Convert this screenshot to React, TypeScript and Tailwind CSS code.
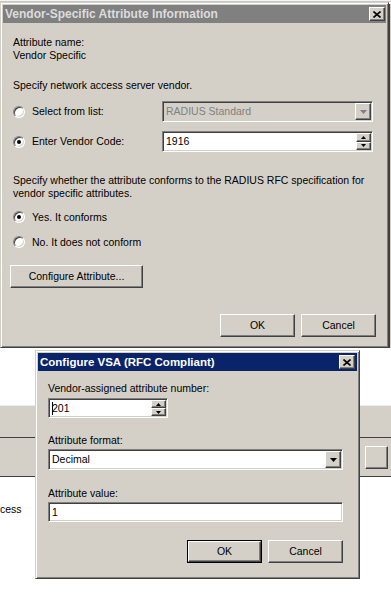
import React from "react";

// classic win32 bevels
const sunken =
  "border border-t-[#808080] border-l-[#808080] border-b-white border-r-white shadow-[inset_1px_1px_0_#404040,inset_-1px_-1px_0_#d4d0c8]";
const raised =
  "bg-[#d4d0c8] border border-t-white border-l-white border-b-[#404040] border-r-[#404040] shadow-[inset_-1px_-1px_0_#808080]";
const frame =
  "bg-[#d4d0c8] border border-t-[#d4d0c8] border-l-[#d4d0c8] border-b-[#404040] border-r-[#404040] shadow-[inset_1px_1px_0_#ffffff,inset_-1px_-1px_0_#808080]";

function Tri({ up, color = "#000", w = 7, h = 4 }: { up?: boolean; color?: string; w?: number; h?: number }) {
  return (
    <svg width={w} height={h} viewBox={`0 0 ${w} ${h}`}>
      <path d={up ? `M${w / 2} 0L${w} ${h}H0Z` : `M0 0H${w}L${w / 2} ${h}Z`} fill={color} />
    </svg>
  );
}

function CloseBtn() {
  return (
    <div className={`${raised} w-[16px] h-[14px] flex items-center justify-center`}>
      <svg width="8" height="7" viewBox="0 0 8 7">
        <path d="M0.5 0.5L7.5 6.5M7.5 0.5L0.5 6.5" stroke="#000" strokeWidth="1.6" />
      </svg>
    </div>
  );
}

function Radio({ checked }: { checked?: boolean }) {
  return (
    <span
      className={`w-[12px] h-[12px] rounded-full bg-white ${sunken} flex items-center justify-center shrink-0`}
    >
      {checked && <span className="w-[4px] h-[4px] rounded-full bg-black" />}
    </span>
  );
}

function Combo({ value, width, disabled }: { value: string; width: string; disabled?: boolean }) {
  return (
    <div className={`${sunken} ${width} h-[21px] p-px flex ${disabled ? "bg-[#d4d0c8]" : "bg-white"}`}>
      <div className={`flex-1 pl-[2px] flex items-center ${disabled ? "text-[#808080]" : "text-black"}`}>{value}</div>
      <div className={`${raised} w-[16px] flex items-center justify-center`}>
        <Tri color={disabled ? "#808080" : "#000"} />
      </div>
    </div>
  );
}

function Spin({ value, width, height, caret }: { value: string; width: string; height: string; caret?: boolean }) {
  return (
    <div className={`${sunken} ${width} ${height} p-px flex bg-white`}>
      <div className="flex-1 pl-[2px] flex items-center">
        {caret && <span className="w-px h-[13px] bg-black mr-[-1px]" />}
        {value}
      </div>
      <div className="w-[15px] flex flex-col">
        <div className={`${raised} flex-1 flex items-center justify-center`}>
          <Tri up w={5} h={3} />
        </div>
        <div className={`${raised} flex-1 flex items-center justify-center`}>
          <Tri w={5} h={3} />
        </div>
      </div>
    </div>
  );
}

function Button({ label, width = "w-[75px]", isDefault }: { label: string; width?: string; isDefault?: boolean }) {
  if (isDefault) {
    return (
      <div className="border border-black">
        <div className={`${raised} w-[73px] h-[21px] flex items-center justify-center`}>{label}</div>
      </div>
    );
  }
  return <div className={`${raised} ${width} h-[23px] flex items-center justify-center`}>{label}</div>;
}

function VendorDialog() {
  return (
    <div className={`${frame} w-[389px] h-[346px] p-[2px] flex flex-col`}>
      <div className="h-[18px] bg-[#808080] flex items-center justify-between pl-[2px] pr-[1px]">
        <span className="font-bold text-[12px] text-[#dcdcdc]">Vendor-Specific Attribute Information</span>
        <CloseBtn />
      </div>
      <div className="px-[10px] pt-[13px] flex flex-col">
        <div>Attribute name:</div>
        <div>Vendor Specific</div>
        <div className="mt-[17px]">Specify network access server vendor.</div>
        <div className="mt-[9px] h-[21px] flex items-center">
          <div className="w-[149px] flex items-center gap-[7px]">
            <Radio />
            <span>Select from list:</span>
          </div>
          <Combo value="RADIUS Standard" width="w-[211px]" disabled />
        </div>
        <div className="mt-[9px] h-[21px] flex items-center">
          <div className="w-[149px] flex items-center gap-[7px]">
            <Radio checked />
            <span>Enter Vendor Code:</span>
          </div>
          <Spin value="1916" width="w-[211px]" height="h-[21px]" />
        </div>
        <div className="mt-[22px]">
          Specify whether the attribute conforms to the RADIUS RFC specification for
          <br />
          vendor specific attributes.
        </div>
        <div className="mt-[9px] h-[16px] flex items-center gap-[7px]">
          <Radio checked />
          <span>Yes. It conforms</span>
        </div>
        <div className="mt-[9px] h-[16px] flex items-center gap-[7px]">
          <Radio />
          <span>No. It does not conform</span>
        </div>
        <div className="mt-[15px] -ml-[3px]">
          <Button label="Configure Attribute..." width="w-[133px]" />
        </div>
        <div className="mt-[26px] flex justify-end gap-[6px]">
          <Button label="OK" />
          <Button label="Cancel" />
        </div>
      </div>
    </div>
  );
}

function VsaDialog() {
  return (
    <div className={`${frame} absolute left-[35px] top-[350px] w-[325px] h-[229px] p-[2px] flex flex-col`}>
      <div className="h-[18px] bg-[#0a246a] flex items-center justify-between pl-[2px] pr-[2px]">
        <span className="font-bold text-[11.5px] text-white">Configure VSA (RFC Compliant)</span>
        <CloseBtn />
      </div>
      <div className="px-[10px] pt-[11px] flex flex-col">
        <div>Vendor-assigned attribute number:</div>
        <div className="mt-[3px]">
          <Spin value="201" width="w-[120px]" height="h-[20px]" caret />
        </div>
        <div className="mt-[16px]">Attribute format:</div>
        <div className="mt-[2px]">
          <Combo value="Decimal" width="w-[295px]" />
        </div>
        <div className="mt-[17px]">Attribute value:</div>
        <div className={`mt-[2px] ${sunken} bg-white w-[295px] h-[20px] p-px pl-[3px] flex items-center`}>1</div>
        <div className="mt-[18px] pr-[4px] flex justify-end gap-[6px]">
          <Button label="OK" isDefault />
          <Button label="Cancel" />
        </div>
      </div>
    </div>
  );
}

export default function App() {
  return (
    <div className="relative w-[391px] h-[595px] overflow-hidden bg-white text-black font-['Liberation_Sans',Arial,sans-serif] text-[10.5px] leading-[13px]">
      {/* edge of the window behind */}
      <div className="h-[2px] bg-[#f4f4f4] border-b border-[#c8c8c8]" />
      <div className="flex">
        <VendorDialog />
        <div className="w-[2px] mt-[2px] border-l border-[#404040] bg-[#d4d0c8]" />
      </div>
      <div className="h-[57px] bg-white" />
      <div className="h-[33px] bg-[#d4d0c8] border-t border-[#ececec] border-b border-b-[#404040]" />
      <div className="h-[39px] bg-[#d4d0c8] border-b border-[#404040] flex items-center justify-end pr-[3px]">
        <div className={`${raised} w-[23px] h-[23px]`} />
      </div>
      <div className="pt-[26px]">cess</div>
      <VsaDialog />
    </div>
  );
}
